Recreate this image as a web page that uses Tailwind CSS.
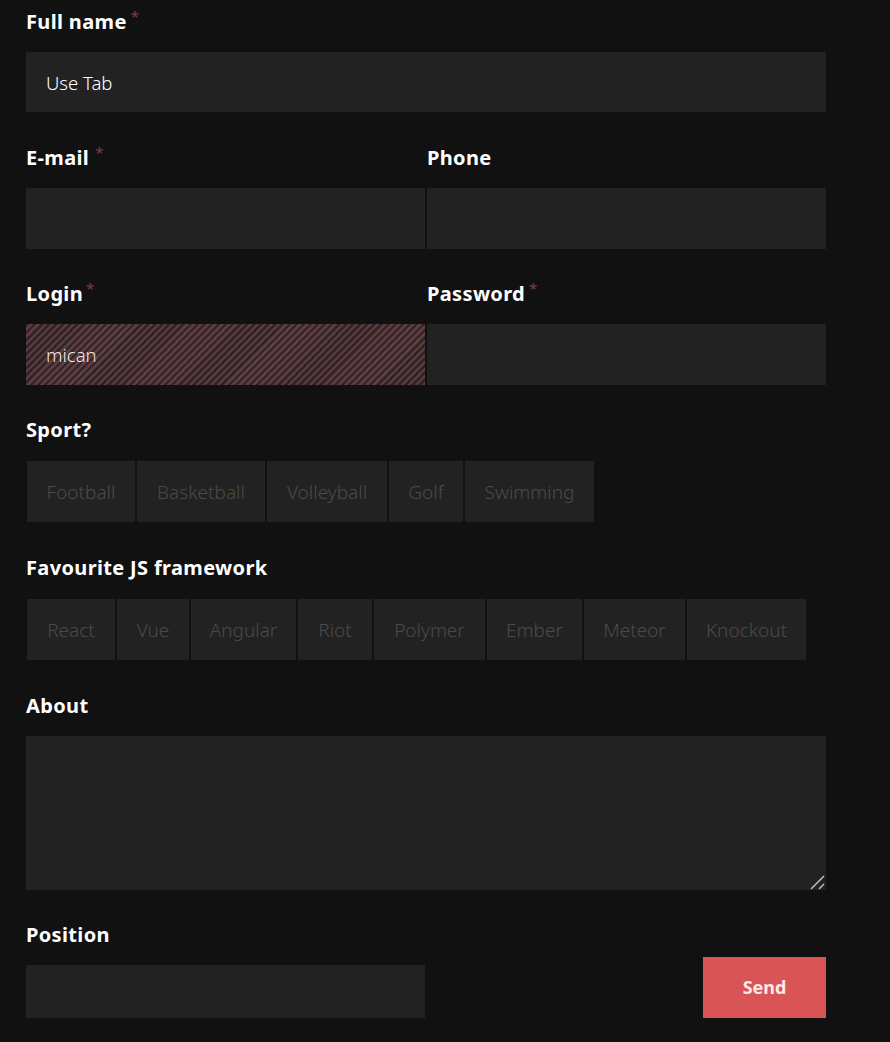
<!DOCTYPE html>
<html lang="en">
<head>
  <meta charset="UTF-8">
  <title>Form</title>
  <script src="https://cdn.jsdelivr.net/npm/@tailwindcss/browser@4"></script>
</head>
<body class="bg-[#111111] font-['Noto_Sans',sans-serif] text-white overflow-hidden">
  <form class="w-[800px] ml-[26px] h-[1042px] relative">

    <!-- Full name -->
    <div class="h-[52px] pt-[7px]">
      <label class="text-[20px] leading-[30px] font-bold tracking-[0.35px]">Full name<sup class="text-[#803a4a] text-[15px] font-normal ml-[4px]">*</sup></label>
    </div>
    <input type="text" value="Use Tab" class="block w-full h-[60px] bg-[#222222] px-5 text-[18.5px] font-light text-white outline-none">

    <!-- E-mail / Phone -->
    <div class="flex gap-[2px] mt-[31px]">
      <div class="w-[399px]">
        <label class="block h-[45px] text-[20px] leading-[30px] font-bold tracking-[0.35px]">E-mail<sup class="text-[#803a4a] text-[15px] font-normal ml-[6px]">*</sup></label>
        <input type="email" class="block w-full h-[61px] bg-[#222222] outline-none">
      </div>
      <div class="w-[399px]">
        <label class="block h-[45px] text-[20px] leading-[30px] font-bold tracking-[0.35px]">Phone</label>
        <input type="text" class="block w-full h-[61px] bg-[#222222] outline-none">
      </div>
    </div>

    <!-- Login / Password -->
    <div class="flex gap-[2px] mt-[30px]">
      <div class="w-[399px]">
        <label class="block h-[45px] text-[20px] leading-[30px] font-bold tracking-[0.35px]">Login<sup class="text-[#803a4a] text-[15px] font-normal ml-[3px]">*</sup></label>
        <input type="text" value="mican" class="block w-full h-[61px] px-5 text-[18.5px] font-light text-[#f3e6e6] outline-none bg-[repeating-linear-gradient(-45deg,#5f3b3d_0,#5f3b3d_2.5px,#2e2628_2.5px,#2e2628_5px)]">
      </div>
      <div class="w-[399px]">
        <label class="block h-[45px] text-[20px] leading-[30px] font-bold tracking-[0.35px]">Password<sup class="text-[#803a4a] text-[15px] font-normal ml-[4px]">*</sup></label>
        <input type="password" class="block w-full h-[61px] bg-[#222222] outline-none">
      </div>
    </div>

    <!-- Sport -->
    <label class="block mt-[30px] h-[46px] text-[20px] leading-[30px] font-bold tracking-[0.35px]">Sport?</label>
    <div class="flex gap-[2px] pl-px text-[19px] font-light text-[#4a4a4a]">
      <span class="w-[108px] h-[61px] pt-[2px] bg-[#222222] flex items-center justify-center">Football</span>
      <span class="w-[128px] h-[61px] pt-[2px] bg-[#222222] flex items-center justify-center">Basketball</span>
      <span class="w-[120px] h-[61px] pt-[2px] bg-[#222222] flex items-center justify-center">Volleyball</span>
      <span class="w-[74px] h-[61px] pt-[2px] bg-[#222222] flex items-center justify-center">Golf</span>
      <span class="w-[129px] h-[61px] pt-[2px] bg-[#222222] flex items-center justify-center">Swimming</span>
    </div>

    <!-- Favourite JS framework -->
    <label class="block mt-[31px] h-[46px] text-[20px] leading-[30px] font-bold tracking-[0.35px]">Favourite JS framework</label>
    <div class="flex gap-[2px] pl-px text-[19px] font-light text-[#4a4a4a]">
      <span class="w-[88px] h-[61px] pt-[2px] bg-[#222222] flex items-center justify-center">React</span>
      <span class="w-[72px] h-[61px] pt-[2px] bg-[#222222] flex items-center justify-center">Vue</span>
      <span class="w-[105px] h-[61px] pt-[2px] bg-[#222222] flex items-center justify-center">Angular</span>
      <span class="w-[74px] h-[61px] pt-[2px] bg-[#222222] flex items-center justify-center">Riot</span>
      <span class="w-[111px] h-[61px] pt-[2px] bg-[#222222] flex items-center justify-center">Polymer</span>
      <span class="w-[95px] h-[61px] pt-[2px] bg-[#222222] flex items-center justify-center">Ember</span>
      <span class="w-[101px] h-[61px] pt-[2px] bg-[#222222] flex items-center justify-center">Meteor</span>
      <span class="w-[119px] h-[61px] pt-[2px] bg-[#222222] flex items-center justify-center">Knockout</span>
    </div>

    <!-- About -->
    <label class="block mt-[31px] h-[45px] text-[20px] leading-[30px] font-bold tracking-[0.35px]">About</label>
    <div class="relative h-[154px]">
      <textarea class="block w-full h-full bg-[#222222] outline-none resize-none"></textarea>
      <svg class="absolute right-0 bottom-0 w-4 h-4" viewBox="0 0 16 16" fill="none" stroke="#c4c4c4" stroke-width="1.4">
        <path d="M1 15 L14 2"></path>
        <path d="M9 15 L14 10"></path>
      </svg>
    </div>

    <!-- Position + Send -->
    <div class="flex justify-between items-end mt-[30px]">
      <div class="w-[399px]">
        <label class="block h-[45px] text-[20px] leading-[30px] font-bold tracking-[0.35px]">Position</label>
        <input type="text" class="block w-full h-[53px] bg-[#222222] outline-none">
      </div>
      <button type="button" class="w-[123px] h-[61px] bg-[#d95555] text-[18px] font-bold text-[#fbeaea]">Send</button>
    </div>
  </form>
</body>
</html>
